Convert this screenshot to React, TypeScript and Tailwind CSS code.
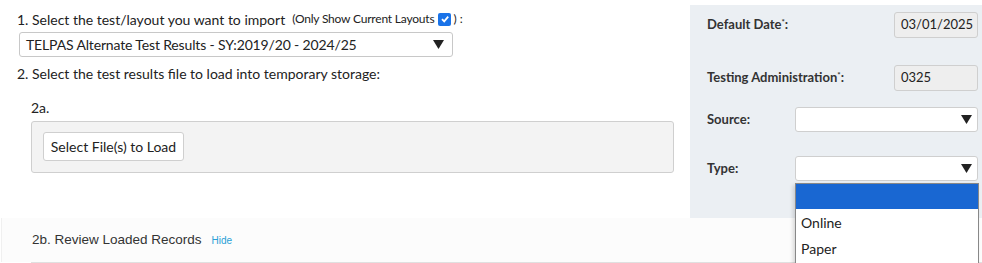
import React from "react";

const F = { fontFamily: "Lato, 'Noto Sans', sans-serif" } as React.CSSProperties;

function Caret() {
  return (
    <svg width="11" height="9" viewBox="0 0 11 9" className="shrink-0">
      <path d="M0 0 H11 L5.5 9 Z" fill="#222" />
    </svg>
  );
}

export default function App() {
  return (
    <div className="relative w-[982px] h-[263px] overflow-hidden bg-white text-[#222]" style={F}>
      <div className="flex h-[218px]">
        <div className="w-[690px] shrink-0">
          <div className="pl-[17px] pt-[8px] flex items-center h-[30px] text-[14px]">
            <span>1. Select the test/layout you want to import</span>
            <span className="ml-[7px] text-[12px] tracking-[-0.2px]">(Only Show Current Layouts</span>
            <span className="ml-[4px] w-[13px] h-[13px] rounded-[2px] bg-[#1a73e8] flex items-center justify-center">
              <svg width="10" height="10" viewBox="0 0 10 10"><path d="M2 5.2 L4.2 7.4 L8.2 2.6" stroke="white" strokeWidth="1.8" fill="none" /></svg>
            </span>
            <span className="ml-[2px] text-[12px]">) :</span>
          </div>
          <div className="ml-[19px] mt-[2px] w-[434px] h-[25px] border border-[#c8c8c8] rounded-[3px] flex items-center justify-between pl-[6px] pr-[8px] text-[14px]">
            <span className="tracking-[-0.15px]">TELPAS Alternate Test Results - SY:2019/20 - 2024/25</span>
            <Caret />
          </div>
          <div className="pl-[17px] mt-[7px] text-[14px] h-[20px] leading-[20px]">2. Select the test results file to load into temporary storage:</div>
          <div className="pl-[31px] mt-[14px] text-[14px] h-[20px] leading-[20px]">2a.</div>
          <div className="ml-[31px] mt-[3px] w-[643px] h-[52px] bg-[#f3f3f3] border border-[#cfcfcf] rounded-[3px] pl-[11px] pt-[10px]">
            <div className="w-[141px] h-[29px] bg-white border border-[#cfcfcf] rounded-[3px] flex items-center justify-center text-[14px]">Select File(s) to Load</div>
          </div>
        </div>
        <div className="mt-[5px] w-[292px] h-[213px] bg-[#ebeff3] pl-[17px] pr-[4px] text-[13px] font-bold text-[#333]">
          <div className="flex items-center justify-between h-[26px] mt-[7px]">
            <span>Default Date<sup className="text-[8px]">*</sup>:</span>
            <div className="w-[84px] h-[26px] bg-[#eeeeee] border border-[#cfcfcf] rounded-[3px] flex items-center pl-[6px] font-normal text-[13px] text-[#222]">03/01/2025</div>
          </div>
          <div className="flex items-center justify-between h-[26px] mt-[27px]">
            <span>Testing Administration<sup className="text-[8px]">*</sup>:</span>
            <div className="w-[84px] h-[26px] bg-[#eeeeee] border border-[#cfcfcf] rounded-[3px] flex items-center pl-[6px] font-normal text-[13px] text-[#222]">0325</div>
          </div>
          <div className="flex items-center justify-between h-[25px] mt-[16px]">
            <span>Source:</span>
            <div className="w-[183px] h-[25px] bg-white border border-[#cfcfcf] rounded-[3px] flex items-center justify-end pr-[5px]"><Caret /></div>
          </div>
          <div className="flex items-center justify-between h-[25px] mt-[24px]">
            <span>Type:</span>
            <div className="w-[183px] h-[25px] bg-white border border-[#cfcfcf] rounded-[3px] flex items-center justify-end pr-[5px]"><Caret /></div>
          </div>
        </div>
      </div>
      <div className="h-[44px] bg-[#fcfcfc] border-l border-[#f0f0f0] ml-[1px] flex items-center pl-[30px] pt-[1px]" style={{ fontFamily: "'Liberation Sans', Arial, sans-serif" }}>
        <span className="text-[13.5px] text-[#333]">2b. Review Loaded Records</span>
        <span className="ml-[10px] text-[10px] text-[#2a9fd6]">Hide</span>
      </div>
      <div className="ml-[31px] h-[1px] bg-[#e0e0e0]" />
      <div className="absolute left-[795px] top-[183px] w-[184px] h-[82px] bg-white border border-[#888] text-[14px] shadow-[-2px_2px_4px_rgba(0,0,0,0.15)]">
        <div className="h-[25px] bg-[#1967d2]" />
        <div className="h-[26px] flex items-center pl-[5px]">Online</div>
        <div className="h-[26px] flex items-center pl-[5px]">Paper</div>
      </div>
    </div>
  );
}
